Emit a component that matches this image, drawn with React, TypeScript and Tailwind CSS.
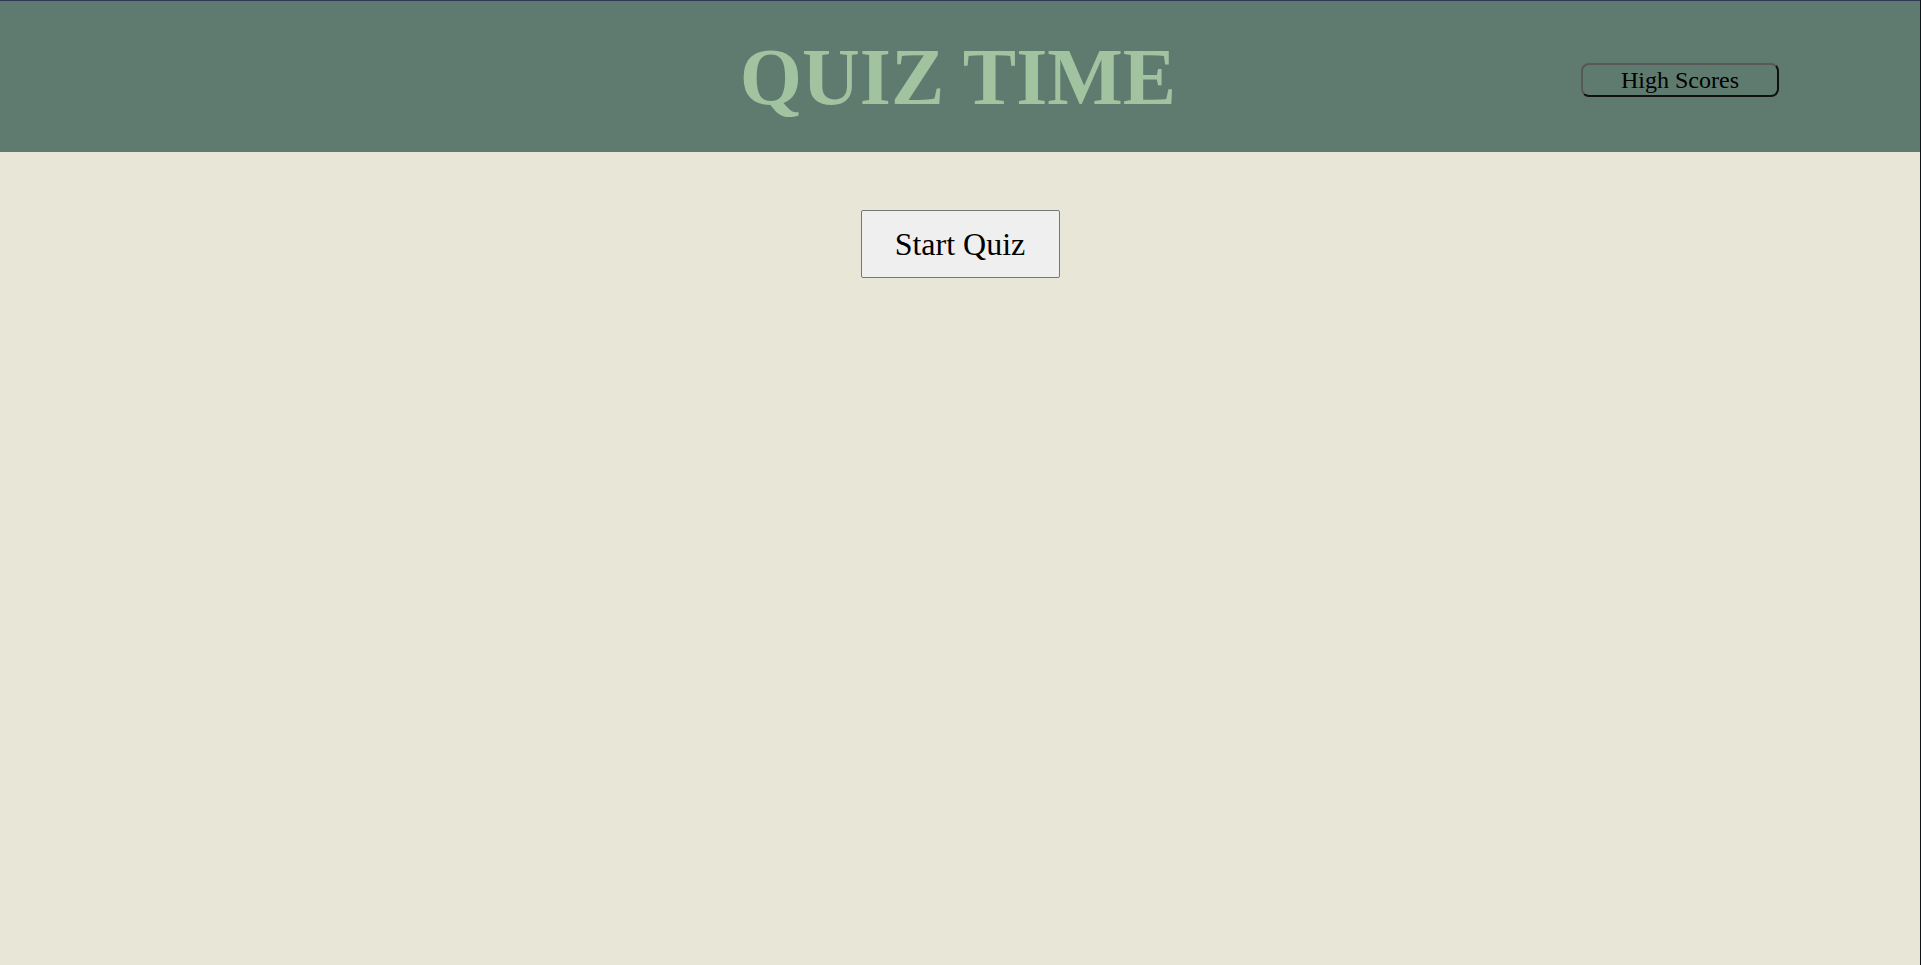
import React from "react";

export default function App() {
  return (
    <div className="w-[1921px] h-[965px] bg-[#e8e6d6] flex flex-col border-r border-[#11131a] overflow-hidden" style={{ fontFamily: '"Liberation Serif", "Times New Roman", serif' }}>
      <div className="h-px w-full bg-[#2d3858]" />
      <header className="h-[151px] bg-[#5f7b6f] grid grid-cols-[1fr_auto_1fr] items-center">
        <div />
        <h1 className="text-[80px] leading-none font-bold text-[#a1c3a0] -ml-[4px]">QUIZ TIME</h1>
        <div className="flex justify-end pr-[141px] pt-[6px]">
          <button className="w-[198px] h-[34px] rounded-[8px] border-2 border-t-[#585858] border-l-[#585858] border-r-[#111] border-b-[#111] bg-transparent text-[24px] leading-none text-black">
            High Scores
          </button>
        </div>
      </header>
      <main className="flex justify-center pt-[58px]">
        <button className="w-[199px] h-[68px] bg-[#efefef] border border-[#767676] rounded-[2px] text-[32px] leading-none text-black">
          Start Quiz
        </button>
      </main>
    </div>
  );
}
